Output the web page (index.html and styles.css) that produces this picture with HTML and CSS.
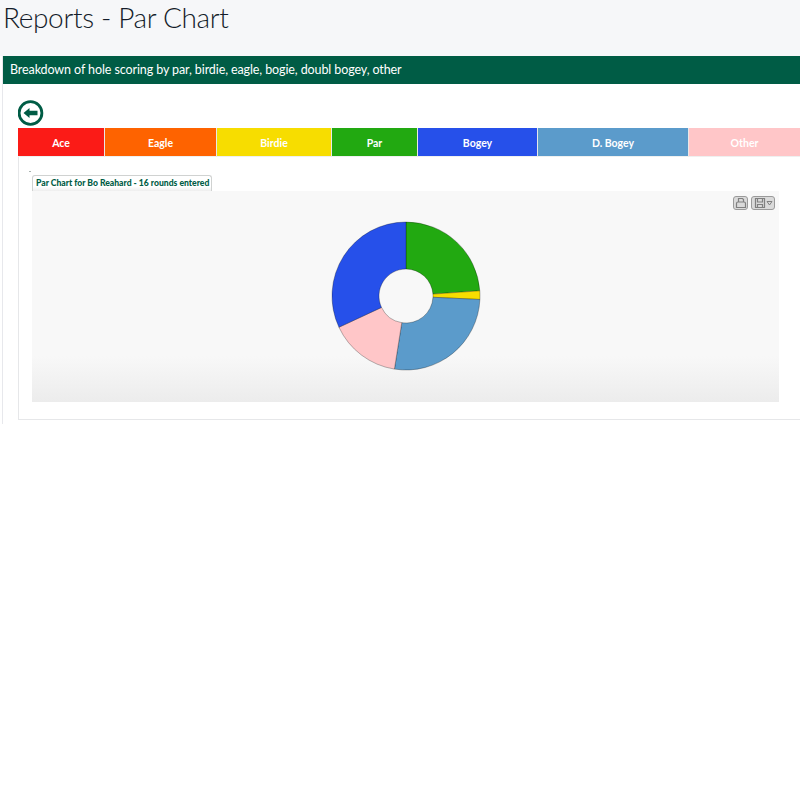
FILE: index.html
```html
<!DOCTYPE html>
<html lang="en">
<head>
<meta charset="utf-8">
<title>Reports - Par Chart</title>
<link rel="stylesheet" href="styles.css">
</head>
<body>
<header class="page-head"><h1 class="page-title">Reports - Par Chart</h1></header>
<main class="panel">
  <div class="panel-bar">Breakdown of hole scoring by par, birdie, eagle, bogie, doubl bogey, other</div>
  <div class="panel-body">
    <a class="back" href="#" aria-label="Back">
      <svg width="26" height="26" viewBox="0 0 26 26">
        <circle cx="12.5" cy="13" r="11.4" fill="#fff" stroke="#005c45" stroke-width="2.8"/>
        <path d="M5.5 13 L11.5 8 V10.7 H19.5 V15.3 H11.5 V18 Z" fill="#005c45"/>
      </svg>
    </a>
    <div class="legend">
      <div class="seg ace">Ace</div>
      <div class="seg eagle">Eagle</div>
      <div class="seg birdie">Birdie</div>
      <div class="seg par">Par</div>
      <div class="seg bogey">Bogey</div>
      <div class="seg dbogey">D. Bogey</div>
      <div class="seg other">Other</div>
    </div>
    <section class="card">
      <div class="dot"></div>
      <div class="tab">Par Chart for Bo Reahard - 16 rounds entered</div>
      <div class="chart">
        <div class="tools">
          <span class="tool">
            <svg width="12" height="12" viewBox="0 0 12 12" fill="none" stroke="#808080" stroke-width="1.2"><path d="M3.5 5V1.5H7.5L8.5 2.5V5"/><path d="M1.5 6.5C1.5 5.5 2 5 3 5H9C10 5 10.5 5.5 10.5 6.5V10.5H1.5Z"/></svg>
          </span>
          <span class="tool tool-wide">
            <svg width="12" height="12" viewBox="0 0 12 12" fill="none" stroke="#808080" stroke-width="1.2"><path d="M1.5 1.5H10.5V10.5H1.5Z"/><path d="M3.5 1.5V5H8.5V1.5"/><path d="M3.5 10.5V7.5H8.5V10.5"/></svg>
            <svg width="7" height="12" viewBox="0 0 7 12" fill="none" stroke="#808080" stroke-width="1"><path d="M1 4.5H6L3.5 8Z"/></svg>
          </span>
        </div>
        <svg class="pie" width="150" height="150" viewBox="0 0 150 150">
          <g stroke-width="1" stroke-opacity=".28" stroke="#000">
            <path fill="#22a911" d="M75 1A74 74 0 0 1 148.82 69.84L101.93 73.12A27 27 0 0 0 75 48Z"/>
            <path fill="#f7dd00" d="M148.82 69.84A74 74 0 0 1 148.92 78.49L101.97 76.27A27 27 0 0 0 101.93 73.12Z"/>
            <path fill="#5b9bcb" d="M148.92 78.49A74 74 0 0 1 63.42 148.09L70.78 101.67A27 27 0 0 0 101.97 76.27Z"/>
            <path fill="#ffc6c8" d="M63.42 148.09A74 74 0 0 1 7.93 106.27L50.53 86.41A27 27 0 0 0 70.78 101.67Z"/>
            <path fill="#2650ea" d="M7.93 106.27A74 74 0 0 1 75 1V48A27 27 0 0 0 50.53 86.41Z"/>
          </g>
        </svg>
      </div>
    </section>
  </div>
</main>
</body>
</html>
```
FILE: styles.css
```css
* { box-sizing: border-box; }
html, body { margin: 0; padding: 0; background: #fff; }
body { width: 800px; height: 800px; overflow: hidden; font-family: "Lato", "Open Sans", "Liberation Sans", sans-serif; }
.page-head { height: 56px; background: #f6f7f9; padding: 0 0 0 3px; }
.page-title { margin: 0; font-size: 28px; font-weight: 300; line-height: 35px; letter-spacing: -0.35px; color: #141c2a; }
.panel { margin-left: 2px; height: 368px; border-left: 1px solid #e7e8ec; overflow: hidden; }
.panel-bar { height: 28px; background: #005c45; color: #fff; font-size: 12.5px; line-height: 28px; letter-spacing: -0.1px; padding-left: 7px; white-space: nowrap; }
.panel-body { padding: 16px 0 0 15px; width: 900px; }
.back { display: block; height: 28px; }
.back svg { display: block; }
.legend { display: grid; grid-template-columns: 87px 112px 115px 86px 120px 151px 111px; grid-template-rows: 29px; height: 29px; width: 782px; }
.seg { color: #fff; font-size: 10.5px; font-weight: 700; line-height: 30px; text-align: center; border-right: 1px solid #e8e8e8; border-bottom: 1px solid #eef0f0; }
.ace { background: #fb1b17; }
.eagle { background: #fe6300; }
.birdie { background: #f7dd00; }
.par { background: #22a911; }
.bogey { background: #2650ea; }
.dbogey { background: #5b9bcb; }
.other { background: #ffc6c8; border-right: 0; }
.card { position: relative; width: 800px; height: 263px; border: 1px solid #e6e7e9; border-top: 0; padding: 18px 0 0 13px; }
.dot { position: absolute; left: 10px; top: 14px; width: 2px; height: 1px; background: #a9b3b0; }
.tab { width: 180px; height: 16px; background: linear-gradient(#fff 70%, #eeeeee); border: 1px solid #d0d2d1; border-bottom: 0; border-radius: 3px 3px 0 0; color: #005c45; font-size: 8.6px; font-weight: 900; line-height: 15px; padding-left: 3px; white-space: nowrap; overflow: hidden; }
.chart { position: relative; width: 747px; height: 211px; padding-top: 30px; display: flex; justify-content: center; align-items: flex-start; background: linear-gradient(#f8f8f8 0, #f8f8f8 165px, #ececec 211px); }
.pie { display: block; }
.tools { position: absolute; top: 5px; right: 4px; display: flex; gap: 3px; }
.tool { display: flex; align-items: center; justify-content: center; width: 15px; height: 14px; border: 1px solid #9a9a9a; border-radius: 3px; background: #dadada; }
.tool-wide { width: 24px; }
```
